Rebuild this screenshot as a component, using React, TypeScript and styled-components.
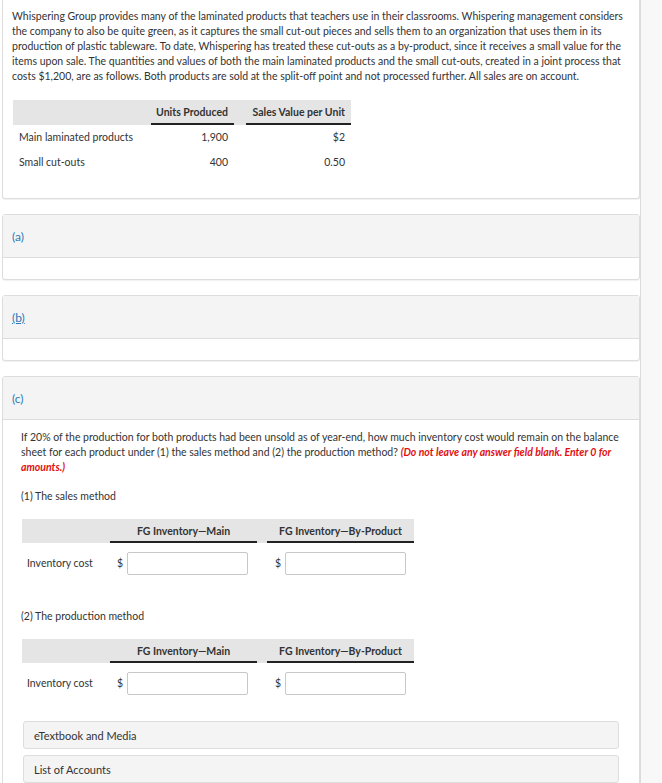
import React from "react";
import styled, { createGlobalStyle } from "styled-components";

const GlobalStyle = createGlobalStyle`
  html, body {
    margin: 0;
    padding: 0;
    background: #ffffff;
  }
  body {
    font-family: Lato, "Open Sans", Arial, sans-serif;
    color: #333333;
    font-size: 10.5px;
  }
`;

const Page = styled.div`
  display: flex;
  min-height: 783px;
  overflow: hidden;
`;

const Main = styled.div`
  width: 638px;
  padding-left: 2px;
  display: flex;
  flex-direction: column;
  gap: 15px;
`;

const Side = styled.div`
  flex: 1;
  background: #f8f8f8;
  border-left: 1px solid #dcdcdc;
`;

const Card = styled.div<{ $cut?: boolean }>`
  border: 1px solid #dddddd;
  border-top: ${(p) => (p.$cut ? "none" : "1px solid #dddddd")};
  border-radius: ${(p) => (p.$cut ? "0 0 3px 3px" : "3px")};
  background: #ffffff;
  box-shadow: 0 1px 1px rgba(0, 0, 0, 0.06);
`;

const Intro = styled.div`
  padding: 9px 9px 23px 9px;
`;

const Para = styled.p`
  margin: 0;
  line-height: 15px;
`;

const Warn = styled.span`
  color: #e21010;
  font-weight: 700;
  font-style: italic;
`;

const DataGrid = styled.div<{ $cols: string; $gap: number }>`
  display: grid;
  grid-template-columns: ${(p) => p.$cols};
  column-gap: ${(p) => p.$gap}px;
`;

const HeadRow = styled(DataGrid)`
  background: #e5e5e5;
`;

const HeadCell = styled.div<{ $align?: string; $h: number }>`
  height: ${(p) => p.$h}px;
  line-height: ${(p) => p.$h}px;
  text-align: ${(p) => p.$align || "right"};
  font-weight: 700;
  color: #333333;
  padding-right: ${(p) => (p.$align === "center" ? 0 : 6)}px;
  box-sizing: border-box;
  white-space: nowrap;
`;

const UnderCell = styled(HeadCell)`
  border-bottom: 2px solid #222222;
`;

const Cell = styled.div<{ $align?: string }>`
  height: 25px;
  line-height: 25px;
  text-align: ${(p) => p.$align || "right"};
  padding: 0 6px 0 6px;
  white-space: nowrap;
`;

const IntroTable = styled.div`
  width: 338px;
  margin: 16px 0 0 1px;
`;

const SectionHead = styled.div`
  background: #f4f4f4;
  border-bottom: 1px solid #dddddd;
  height: 42px;
  display: flex;
  align-items: center;
  padding-left: 9px;
`;

const PartLabel = styled.span<{ $link?: boolean }>`
  color: #2a7ab8;
  font-size: 12px;
  font-weight: 400;
  text-decoration: ${(p) => (p.$link ? "underline" : "none")};
`;

const EmptyBody = styled.div`
  height: 21px;
`;

const PartBody = styled.div`
  padding: 10px 20px 0 18px;
`;

const SubTitle = styled.div`
  margin: 14px 0 0 0;
  line-height: 15px;
`;

const AnswerTable = styled.div`
  margin: 15px 0 0 1px;
  width: 392px;
`;

const LabelCell = styled.div`
  height: 40px;
  display: flex;
  align-items: center;
  padding-left: 5px;
`;

const InputCell = styled.div<{ $dollarPad: number }>`
  height: 40px;
  display: flex;
  align-items: center;
  padding-left: ${(p) => p.$dollarPad}px;
  gap: 4px;
`;

const Dollar = styled.span`
  width: 6px;
`;

const AmountInput = styled.input`
  width: 121px;
  height: 23px;
  box-sizing: border-box;
  border: 1px solid #c8c8c8;
  border-radius: 2px;
  background: #ffffff;
  font-family: inherit;
  font-size: 11px;
`;

const Gap = styled.div<{ $h: number }>`
  height: ${(p) => p.$h}px;
`;

const Resource = styled.div`
  height: 28px;
  box-sizing: border-box;
  margin: 0 0 6px 2px;
  display: flex;
  align-items: center;
  padding-left: 10px;
  background: #f4f4f4;
  border: 1px solid #dddddd;
  border-radius: 3px;
  font-size: 11px;
`;

const introCols = "126px 83px 105px";
const answerCols = "78px 147px 147px";

const AnswerBlock: React.FC<{ title: string }> = ({ title }) => (
  <>
    <SubTitle>{title}</SubTitle>
    <AnswerTable>
      <HeadRow $cols={answerCols} $gap={10}>
        <HeadCell $h={24} />
        <UnderCell $h={24} $align="center">
          FG Inventory—Main
        </UnderCell>
        <UnderCell $h={24} $align="center">
          FG Inventory—By-Product
        </UnderCell>
      </HeadRow>
      <DataGrid $cols={answerCols} $gap={10}>
        <LabelCell>Inventory cost</LabelCell>
        <InputCell $dollarPad={7}>
          <Dollar>$</Dollar>
          <AmountInput type="text" />
        </InputCell>
        <InputCell $dollarPad={8}>
          <Dollar>$</Dollar>
          <AmountInput type="text" />
        </InputCell>
      </DataGrid>
    </AnswerTable>
  </>
);

export default function App() {
  return (
    <Page>
      <GlobalStyle />
      <Main>
        <Card $cut>
          <Intro>
            <Para>
              Whispering Group provides many of the laminated products that
              teachers use in their classrooms. Whispering management considers
              the company to also be quite green, as it captures the small
              cut-out pieces and sells them to an organization that uses them in
              its production of plastic tableware. To date, Whispering has
              treated these cut-outs as a by-product, since it receives a small
              value for the items upon sale. The quantities and values of both
              the main laminated products and the small cut-outs, created in a
              joint process that costs $1,200, are as follows. Both products are
              sold at the split-off point and not processed further. All sales
              are on account.
            </Para>
            <IntroTable>
              <HeadRow $cols={introCols} $gap={12}>
                <HeadCell $h={25} />
                <UnderCell $h={25}>Units Produced</UnderCell>
                <UnderCell $h={25}>Sales Value per Unit</UnderCell>
              </HeadRow>
              <DataGrid $cols={introCols} $gap={12}>
                <Cell $align="left">Main laminated products</Cell>
                <Cell>1,900</Cell>
                <Cell>$2</Cell>
                <Cell $align="left">Small cut-outs</Cell>
                <Cell>400</Cell>
                <Cell>0.50</Cell>
              </DataGrid>
            </IntroTable>
          </Intro>
        </Card>

        <Card>
          <SectionHead>
            <PartLabel>(a)</PartLabel>
          </SectionHead>
          <EmptyBody />
        </Card>

        <Card>
          <SectionHead>
            <PartLabel $link>(b)</PartLabel>
          </SectionHead>
          <EmptyBody />
        </Card>

        <Card>
          <SectionHead>
            <PartLabel>(c)</PartLabel>
          </SectionHead>
          <PartBody>
            <Para>
              If 20% of the production for both products had been unsold as of
              year-end, how much inventory cost would remain on the balance
              sheet for each product under (1) the sales method and (2) the
              production method?{" "}
              <Warn>
                (Do not leave any answer field blank. Enter 0 for amounts.)
              </Warn>
            </Para>
            <AnswerBlock title="(1) The sales method" />
            <Gap $h={12} />
            <AnswerBlock title="(2) The production method" />
            <Gap $h={18} />
            <Resource>eTextbook and Media</Resource>
            <Resource>List of Accounts</Resource>
          </PartBody>
        </Card>
      </Main>
      <Side />
    </Page>
  );
}
